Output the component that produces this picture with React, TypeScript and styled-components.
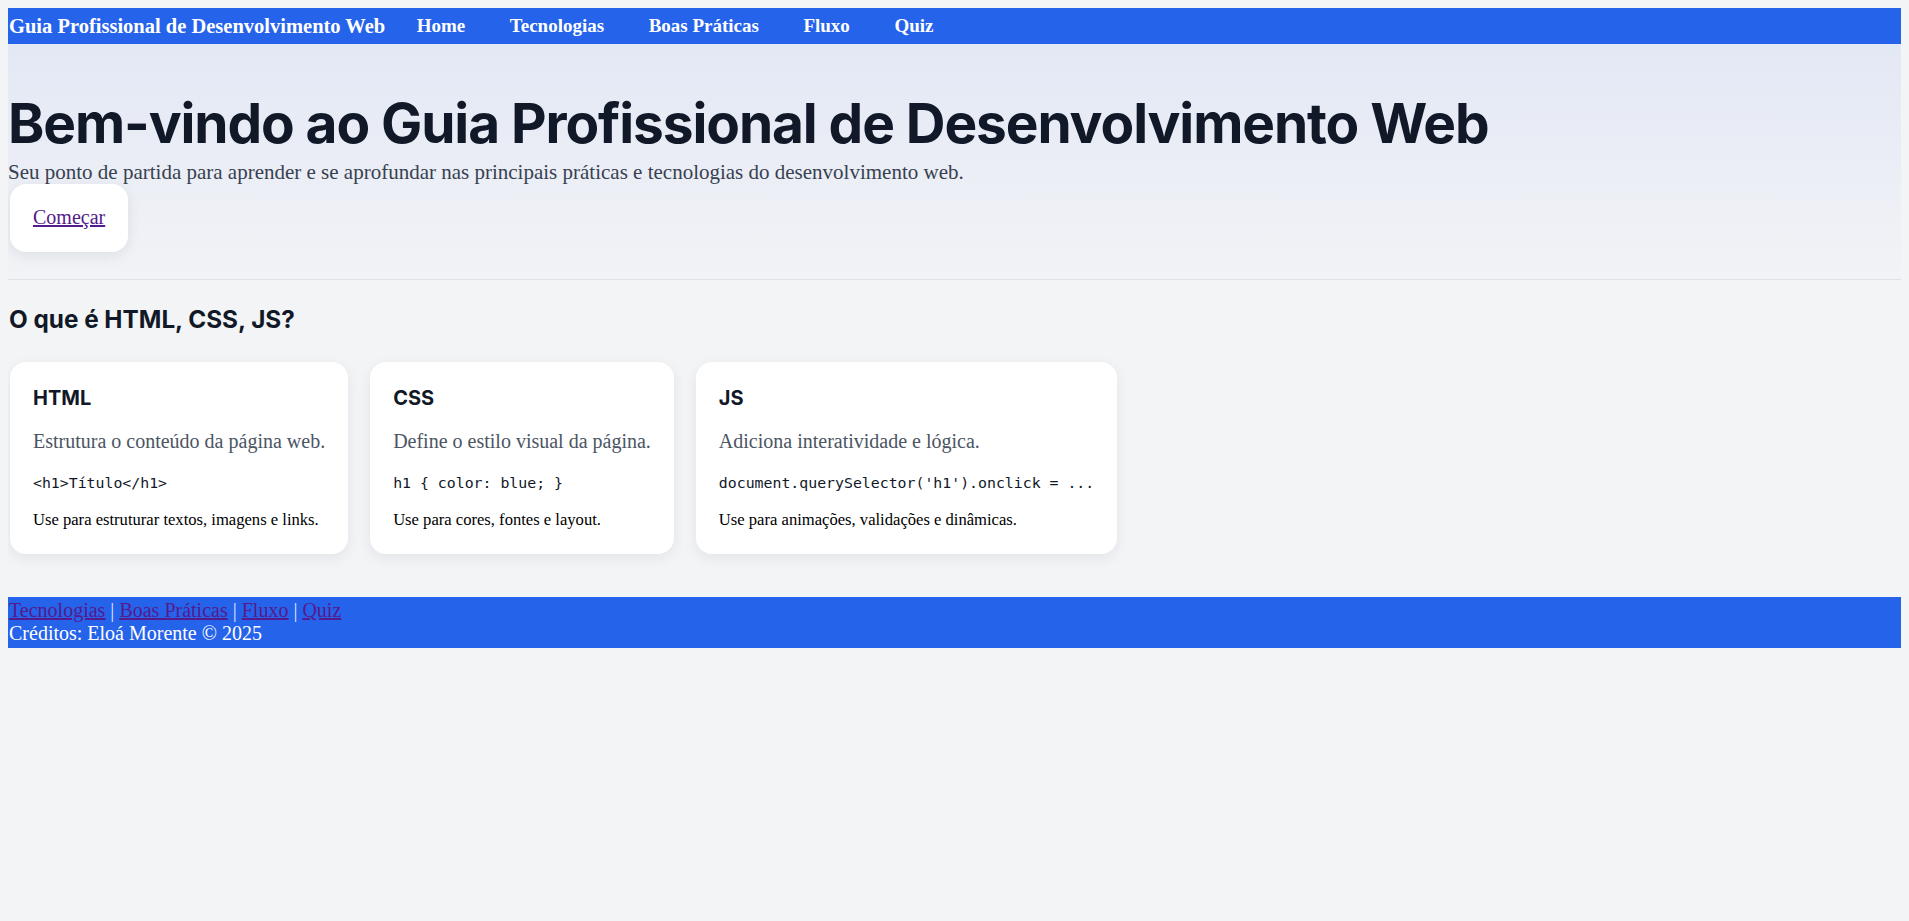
import React from "react";
import styled, { createGlobalStyle } from "styled-components";

const GlobalStyle = createGlobalStyle`
  html, body { background: #f3f4f6; }
  body {
    margin: 8px;
    font-family: "Liberation Serif", "Times New Roman", serif;
    color: #000;
  }
`;

const NavBar = styled.nav`
  display: flex;
  align-items: center;
  height: 36px;
  background: #2563eb;
  color: #fff;
  padding-left: 1px;
`;

const Logo = styled.div`
  font-weight: 700;
  font-size: 20.5px;
  white-space: nowrap;
`;

const NavList = styled.ul`
  display: flex;
  gap: 44.5px;
  margin: 0 0 0 31.5px;
  padding: 0;
  list-style: none;
`;

const NavLink = styled.a`
  color: #fff;
  text-decoration: none;
  font-weight: 700;
  font-size: 19px;
`;

const Hero = styled.header`
  display: flex;
  flex-direction: column;
  align-items: flex-start;
  background: linear-gradient(to bottom, #e3e8f5, #f2f3f6);
  padding: 46px 0 27px;
  border-bottom: 1px solid #dde1e8;
`;

const Title = styled.h1`
  font-family: Inter, "Noto Sans", sans-serif;
  font-weight: 700;
  font-size: 55px;
  letter-spacing: -1.1px;
  line-height: 1.2;
  color: #111827;
  margin: 0;
`;

const Subtitle = styled.p`
  font-size: 21px;
  color: #374151;
  margin: 4px 0 0;
`;

const CtaBox = styled.div`
  margin: -1px 0 0 2px;
  background: #fff;
  border-radius: 16px;
  padding: 22px 23px 23px;
  box-shadow: 0 4px 14px rgba(15, 23, 42, 0.08);
`;

const CtaLink = styled.a`
  font-size: 20px;
  color: #551a8b;
  text-decoration: underline;
`;

const Section = styled.section`
  padding: 25px 0 0;
`;

const SectionTitle = styled.h2`
  font-family: Inter, "Noto Sans", sans-serif;
  font-weight: 700;
  font-size: 24.3px;
  line-height: 1.2;
  color: #111827;
  margin: 0 0 28px 1px;
`;

const CardRow = styled.div`
  display: flex;
  gap: 22px;
  padding-left: 2px;
`;

const Card = styled.article`
  background: #fff;
  border-radius: 16px;
  padding: 24px 23px 24px;
  box-shadow: 0 4px 14px rgba(15, 23, 42, 0.07);
`;

const CardTitle = styled.h3`
  font-family: Inter, "Noto Sans", sans-serif;
  font-weight: 700;
  font-size: 20px;
  line-height: 1.2;
  color: #111827;
  margin: 0 0 20px;
`;

const CardDesc = styled.p`
  font-size: 20px;
  color: #4b5563;
  margin: 0 0 21px;
`;

const Code = styled.code`
  display: block;
  font-family: "DejaVu Sans Mono", "Liberation Mono", monospace;
  font-size: 14.85px;
  color: #111827;
  margin: 0 0 18px;
`;

const CardNote = styled.p`
  font-size: 16.6px;
  margin: 0;
`;

const Footer = styled.footer`
  margin-top: 43px;
  background: #2563eb;
  color: #fff;
  padding: 2px 1px 3px;
  font-size: 20px;
`;

const FooterLinks = styled.div`
  color: #dbe5ff;
`;

const FooterLink = styled.a`
  color: #551a8b;
  text-decoration: underline;
`;

const Credits = styled.div`
  color: #fff;
`;

const cards = [
  {
    title: "HTML",
    desc: "Estrutura o conteúdo da página web.",
    code: "<h1>Título</h1>",
    note: "Use para estruturar textos, imagens e links.",
  },
  {
    title: "CSS",
    desc: "Define o estilo visual da página.",
    code: "h1 { color: blue; }",
    note: "Use para cores, fontes e layout.",
  },
  {
    title: "JS",
    desc: "Adiciona interatividade e lógica.",
    code: "document.querySelector('h1').onclick = ...",
    note: "Use para animações, validações e dinâmicas.",
  },
];

const navItems = ["Home", "Tecnologias", "Boas Práticas", "Fluxo", "Quiz"];
const footerItems = ["Tecnologias", "Boas Práticas", "Fluxo", "Quiz"];

export default function App() {
  return (
    <>
      <GlobalStyle />
      <NavBar>
        <Logo>Guia Profissional de Desenvolvimento Web</Logo>
        <NavList>
          {navItems.map((n) => (
            <li key={n}>
              <NavLink href="#">{n}</NavLink>
            </li>
          ))}
        </NavList>
      </NavBar>
      <Hero>
        <Title>Bem-vindo ao Guia Profissional de Desenvolvimento Web</Title>
        <Subtitle>
          Seu ponto de partida para aprender e se aprofundar nas principais práticas e tecnologias do desenvolvimento web.
        </Subtitle>
        <CtaBox>
          <CtaLink href="#">Começar</CtaLink>
        </CtaBox>
      </Hero>
      <Section>
        <SectionTitle>O que é HTML, CSS, JS?</SectionTitle>
        <CardRow>
          {cards.map((c) => (
            <Card key={c.title}>
              <CardTitle>{c.title}</CardTitle>
              <CardDesc>{c.desc}</CardDesc>
              <Code>{c.code}</Code>
              <CardNote>{c.note}</CardNote>
            </Card>
          ))}
        </CardRow>
      </Section>
      <Footer>
        <FooterLinks>
          {footerItems.map((f, i) => (
            <React.Fragment key={f}>
              {i > 0 && " | "}
              <FooterLink href="#">{f}</FooterLink>
            </React.Fragment>
          ))}
        </FooterLinks>
        <Credits>Créditos: Eloá Morente © 2025</Credits>
      </Footer>
    </>
  );
}
